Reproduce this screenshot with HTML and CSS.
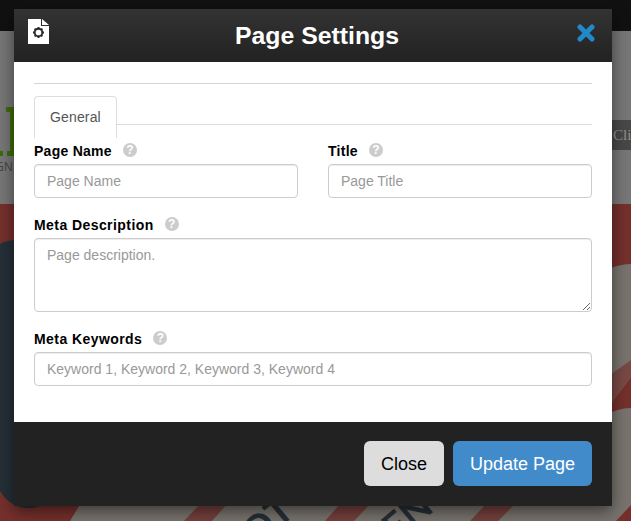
FILE: index.html
```html
<!DOCTYPE html>
<html lang="en">
<head>
<meta charset="utf-8">
<title>Page Settings</title>
<link rel="stylesheet" href="styles.css">
</head>
<body>
<svg class="backdrop" viewBox="0 0 631 521" aria-hidden="true">
  <rect width="631" height="521" fill="#777"/>
  <rect width="631" height="31" fill="#111"/>
  <path d="M6 107h8v49H7v-5h3v-39H6zM0 151h3v5H0z" fill="#3d6b0c"/>
  <text x="-5" y="171" class="tagline">GN</text>
  <rect x="600" y="120" width="31" height="30" fill="#484848"/>
  <text x="613" y="140" class="link">Cli</text>
  <rect y="204" width="631" height="317" fill="#78736d"/>
  <path d="M0 204h100v267L70 521H0z" fill="#75302c"/>
  <path d="M0 244Q8 239 30 239V490H54Q47 508 29 508Q10 508 0 491z" fill="#252f37"/>
  <path d="M600 204h31v60Q618 264 600 272z" fill="#75302c"/>
  <path d="M600 418L631 377V408Q618 408 600 417z" fill="#75302c"/>
  <path d="M600 382L631 360V377L600 418z" fill="#784944"/>
  <path d="M616 521L631 505V521z" fill="#75302c"/>
  <path d="M201 503H228L212 521H184zM341 503H371L354 521H325zM487 503H516L498 521H470z" fill="#75403d"/>
  <text class="poster" transform="translate(256 548) rotate(-40)">OT</text>
  <text class="poster" transform="translate(396 543) rotate(-40)">ENT</text>
</svg>
<main class="modal">
  <header class="modal-header">
    <svg class="page-icon" viewBox="0 0 21 25">
      <path d="M0 0h13v7h8v18H0z" fill="#fff"/><path d="M14 0l7 6h-7z" fill="#fff"/>
      <g fill="none" stroke="#292929"><circle cx="10.5" cy="13.5" r="3.8" stroke-width="1.9"/><path d="M10.5 8v2M10.5 17v2M5 13.5h2M14 13.5h2M6.6 9.6L8 11M13 16l1.4 1.4M6.6 17.4L8 16M13 11l1.4-1.4" stroke-width="1.9"/></g>
    </svg>
    <h1>Page Settings</h1>
    <svg class="close-icon" viewBox="0 0 18 18"><path d="M3 3l12 12M15 3L3 15" stroke="#2089c8" stroke-width="5" stroke-linecap="round"/></svg>
  </header>
  <form class="modal-body">
    <nav class="tabs"><span class="tab">General</span></nav>
    <div class="row">
      <div class="field">
        <label for="name">Page Name <span class="help">?</span></label>
        <input id="name" placeholder="Page Name">
      </div>
      <div class="field">
        <label for="title">Title <span class="help">?</span></label>
        <input id="title" placeholder="Page Title">
      </div>
    </div>
    <div class="field">
      <label for="desc">Meta Description <span class="help">?</span></label>
      <textarea id="desc" placeholder="Page description."></textarea>
    </div>
    <div class="field">
      <label for="keys">Meta Keywords <span class="help">?</span></label>
      <input id="keys" placeholder="Keyword 1, Keyword 2, Keyword 3, Keyword 4">
    </div>
  </form>
  <footer class="modal-footer">
    <button class="btn">Close</button>
    <button class="btn primary">Update Page</button>
  </footer>
</main>
</body>
</html>
```
FILE: styles.css
```css
* { box-sizing: border-box; }
body {
  margin: 0;
  height: 521px;
  overflow: hidden;
  padding: 9px 19px 15px 14px;
  font: 14px/20px "Liberation Sans", Arial, sans-serif;
}
.backdrop { position: absolute; left: 0; top: 0; width: 631px; height: 521px; }
.tagline { font: 12px "Open Sans", sans-serif; fill: #444; }
.link { font: 15px "Liberation Serif", serif; fill: #96918c; }
.poster { font: 700 38px Lato, sans-serif; fill: #252f37; }
.modal {
  position: relative;
  width: 598px;
  height: 497px;
  display: flex;
  flex-direction: column;
  background: #fff;
  box-shadow: 0 5px 15px rgba(0, 0, 0, .5);
}
.modal-header {
  height: 53px;
  flex: none;
  display: flex;
  justify-content: space-between;
  align-items: flex-start;
  padding: 10px 17px 0 14px;
  background: linear-gradient(#333, #222);
}
.page-icon { width: 21px; height: 25px; }
.close-icon { width: 18px; height: 18px; margin-top: 5px; }
h1 { margin: 1px 0 0 8px; font-size: 24.8px; line-height: 32px; color: #fff; }
.modal-body { flex: 1; padding: 21px 20px 0; }
.tabs {
  display: flex;
  height: 58px;
  border-top: 1px solid #d5d5d5;
  padding-top: 12px;
  background: linear-gradient(#ddd, #ddd) 0 40px / 100% 1px no-repeat;
}
.tab {
  width: 83px;
  height: 42px;
  padding: 10px 15px;
  border: 1px solid #ddd;
  border-bottom: 0;
  border-radius: 4px 4px 0 0;
  background: #fff;
  color: #555;
  letter-spacing: .15px;
}
.row { display: flex; gap: 30px; }
.row .field { flex: 1; min-width: 0; }
.field { margin-bottom: 17px; }
label {
  display: flex;
  align-items: center;
  gap: 11px;
  height: 18px;
  padding-top: 2px;
  margin-bottom: 5px;
  font-weight: 700;
  letter-spacing: .43px;
  color: #000;
}
.row label { letter-spacing: .26px; }
.help {
  width: 14px;
  height: 14px;
  margin-top: -2px;
  border-radius: 50%;
  background: #ccc;
  color: #fff;
  font-size: 12px;
  font-weight: 700;
  line-height: 14px;
  letter-spacing: 0;
  text-align: center;
}
input, textarea {
  display: block;
  width: 100%;
  height: 34px;
  padding: 6px 12px;
  border: 1px solid #ccc;
  border-radius: 4px;
  font: inherit;
  background: #fff;
  box-shadow: inset 0 1px 1px rgba(0, 0, 0, .075);
}
textarea { height: 74px; }
::placeholder { color: #999; }
.modal-footer {
  height: 84px;
  flex: none;
  display: flex;
  justify-content: flex-end;
  gap: 9px;
  padding: 19px 20px 20px;
  background: #222;
}
.btn {
  height: 45px;
  width: 80px;
  padding: 0;
  border: 0;
  border-radius: 6px;
  font: 18px/24px "Liberation Sans", Arial, sans-serif;
  background: #ddd;
  color: #000;
}
.primary { width: 139px; background: #428bca; color: #fff; }
```
